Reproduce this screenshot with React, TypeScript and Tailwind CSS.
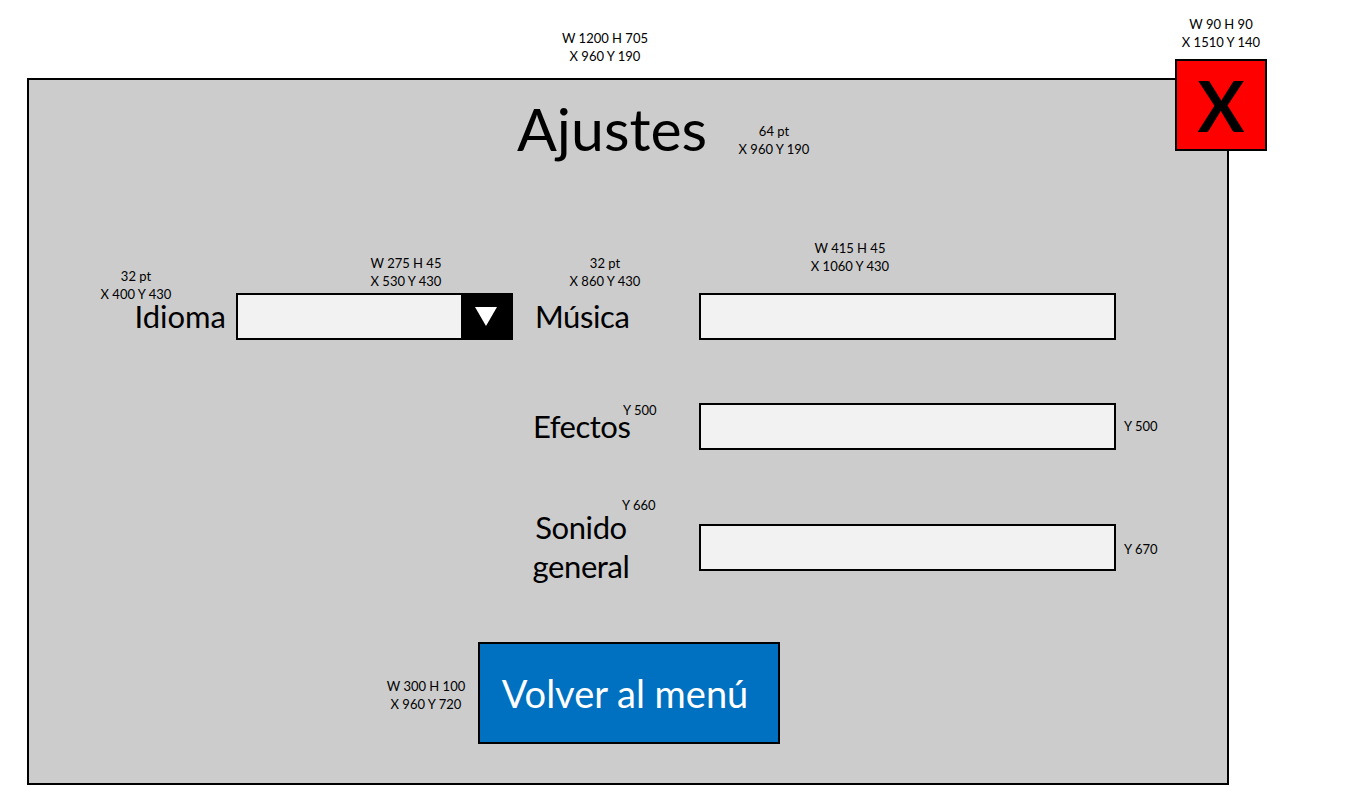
import React from "react";

function Note({ className, lines }: { className: string; lines: string[] }) {
  return (
    <div className={`absolute text-[13px] leading-[18px] text-black whitespace-nowrap ${className}`}>
      {lines.map((l) => (
        <div key={l}>{l}</div>
      ))}
    </div>
  );
}

function Field({ className = "" }: { className?: string }) {
  return <div className={`h-[47px] w-[417px] border-2 border-black bg-[#f2f2f2] ${className}`} />;
}

export default function App() {
  return (
    <div className="relative w-[1357px] h-[785px] overflow-hidden bg-white font-['Lato','Liberation_Sans',sans-serif] text-black">
      {/* settings panel */}
      <div className="ml-[27px] mt-[78px] w-[1202px] h-[707px] border-2 border-black bg-[#cccccc] flex flex-col">
        <h1 className="ml-[488px] mt-[19px] text-[59px] leading-none font-normal">Ajustes</h1>

        <div className="mt-[135px] flex items-center text-[31px]">
          <div className="w-[197px] text-right leading-none">Idioma</div>
          <div className="ml-[10px] w-[277px] h-[47px] border-2 border-black flex">
            <div className="flex-1 bg-[#f2f2f2]" />
            <div className="w-[50px] bg-black flex items-center justify-center">
              <svg width="22" height="19" viewBox="0 0 22 19">
                <polygon points="0,0 22,0 11,19" fill="#ffffff" />
              </svg>
            </div>
          </div>
          <div className="ml-[22px] w-[164px] leading-none tracking-[-0.4px]">Música</div>
          <Field />
        </div>

        <div className="mt-[63px] flex items-center text-[31px] tracking-[-0.5px]">
          <div className="ml-[504px] w-[166px] leading-none">Efectos</div>
          <Field />
        </div>

        <div className="mt-[58px] flex items-center text-[31px] tracking-[-0.4px]">
          <div className="ml-[502px] w-[100px] text-center leading-[39px]">
            Sonido
            <br />
            general
          </div>
          <Field className="ml-[68px]" />
        </div>

        <button className="ml-[449px] mt-[56px] w-[302px] h-[102px] border-2 border-black bg-[#0070c0] text-white text-[38px] leading-none flex items-center justify-center pr-[8px]">
          Volver al menú
        </button>
      </div>

      {/* close button */}
      <div className="absolute left-[1175px] top-[59px] w-[92px] h-[92px] border-2 border-black bg-[#ff0000] flex items-center justify-center">
        <span className="text-[70px] leading-none font-bold text-black">X</span>
      </div>

      {/* spec annotations */}
      <Note className="left-[545px] top-[29px] w-[120px] text-center" lines={["W 1200 H 705", "X 960 Y 190"]} />
      <Note className="left-[1161px] top-[15px] w-[120px] text-center" lines={["W 90 H 90", "X 1510  Y 140"]} />
      <Note className="left-[714px] top-[122px] w-[120px] text-center" lines={["64 pt", "X 960 Y 190"]} />
      <Note className="left-[76px] top-[267px] w-[120px] text-center" lines={["32 pt", "X 400 Y 430"]} />
      <Note className="left-[346px] top-[254px] w-[120px] text-center" lines={["W 275 H 45", "X 530 Y 430"]} />
      <Note className="left-[545px] top-[254px] w-[120px] text-center" lines={["32 pt", "X 860 Y 430"]} />
      <Note className="left-[790px] top-[239px] w-[120px] text-center" lines={["W 415 H 45", "X 1060 Y 430"]} />
      <Note className="left-[623px] top-[401px]" lines={["Y 500"]} />
      <Note className="left-[1124px] top-[417px]" lines={["Y 500"]} />
      <Note className="left-[622px] top-[496px]" lines={["Y 660"]} />
      <Note className="left-[1124px] top-[540px]" lines={["Y 670"]} />
      <Note className="left-[366px] top-[677px] w-[120px] text-center" lines={["W 300 H 100", "X 960 Y 720"]} />
    </div>
  );
}
